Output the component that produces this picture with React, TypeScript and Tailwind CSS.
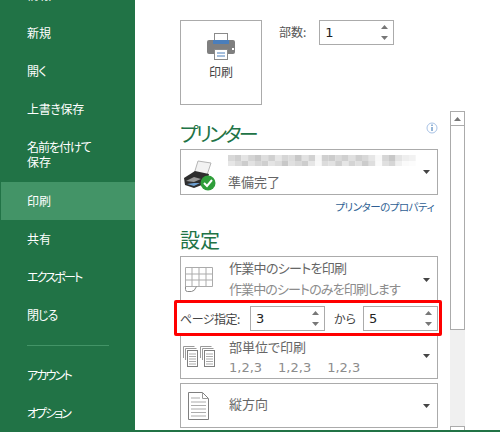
const menuTop = [
  { label: "新規" },
  { label: "開く", cls: "tracking-[-0.5px]" },
  { label: "上書き保存", cls: "tracking-[-0.3px]" },
];
const menuMid = [
  { label: "共有" },
  { label: "エクスポート", cls: "tracking-[-1.800px]" },
  { label: "閉じる", cls: "tracking-[-1px]" },
];

function MenuItem({ label, active, cls }: { label: string; active?: boolean; cls?: string }) {
  return (
    <div className={`flex h-[38px] items-center pb-[2px] ${active ? "ml-px bg-[#439467] pl-[26px]" : "pl-[27px]"} ${cls ?? ""}`}>
      {label}
    </div>
  );
}

function Sidebar() {
  return (
    <aside className="flex h-[432px] w-[135px] shrink-0 flex-col overflow-hidden bg-[#217346] text-[12px] leading-[15px] text-white">
      <div className="-mt-[24px]">
        <MenuItem label="情報" />
        {menuTop.map((m) => (
          <MenuItem key={m.label} label={m.label} cls={m.cls} />
        ))}
        <div className="flex h-[54px] flex-col justify-center pb-[2px] pl-[27px]">
          <span className="tracking-[-1px]">名前を付けて</span>
          <span>保存</span>
        </div>
        <MenuItem label="印刷" active />
        {menuMid.map((m) => (
          <MenuItem key={m.label} label={m.label} cls={m.cls} />
        ))}
        <div className="ml-[27px] mt-[11px] h-px w-[82px] bg-[#439467]" />
        <div className="mt-[10px]">
          <MenuItem label="アカウント" cls="tracking-[-1.800px]" />
          <MenuItem label="オプション" cls="tracking-[-2px]" />
        </div>
      </div>
    </aside>
  );
}

function Arrow({ up }: { up?: boolean }) {
  return (
    <svg width="7" height="4" viewBox="0 0 7 4" className="block">
      <path d={up ? "M3.5 0 7 4H0z" : "M0 0h7L3.5 4z"} fill="#777" />
    </svg>
  );
}

function Spinner({ value }: { value: string }) {
  return (
    <div className="flex h-[25px] w-[75px] items-center justify-between border border-[#ababab] bg-white pl-[5px] pr-[5px]">
      <span className="font-['DejaVu_Sans',sans-serif] text-[13px] text-[#222]">{value}</span>
      <div className="flex flex-col gap-[7px]">
        <Arrow up />
        <Arrow />
      </div>
    </div>
  );
}

function Caret() {
  return (
    <svg width="7" height="4" viewBox="0 0 7 4" className="mr-[7px] shrink-0">
      <path d="M0 0h7L3.5 4z" fill="#444" />
    </svg>
  );
}

function SelectBox({
  icon,
  iconPad,
  title,
  sub,
  className,
  textClass,
}: {
  icon: React.ReactNode;
  iconPad: string;
  title: React.ReactNode;
  sub?: React.ReactNode;
  className: string;
  textClass: string;
}) {
  return (
    <div className={`flex items-center border border-[#ababab] bg-white ${className}`}>
      <div className={`flex w-[48px] shrink-0 ${iconPad}`}>{icon}</div>
      <div className={`flex flex-1 flex-col gap-[6px] text-[13px] leading-[15px] text-[#666] ${textClass}`}>
        {title}
        {sub}
      </div>
      <Caret />
    </div>
  );
}

function BigPrinterIcon() {
  return (
    <svg width="28" height="27" viewBox="0 0 28 27">
      <rect x="7.5" y="0.5" width="13" height="9" fill="#fff" stroke="#8a8a8a" />
      <rect x="0" y="7" width="28" height="14" rx="2" fill="#7f7f7f" />
      <rect x="6" y="7" width="16" height="4" fill="#4a7ebb" />
      <rect x="25" y="15" width="2" height="2" fill="#fff" />
      <rect x="7.5" y="16.5" width="13" height="10" fill="#fff" stroke="#8a8a8a" />
      <path d="M10 20h8M10 23h8" stroke="#4a7ebb" />
    </svg>
  );
}

function PrinterStatusIcon() {
  return (
    <svg width="34" height="32" viewBox="0 0 34 32">
      <path d="M15 2 28 4 24 16 11 15z" fill="#f2f2f2" stroke="#b5b5b5" />
      <path d="M1 19 12 12 26 15 24 24 11 29 2 26z" fill="#2e2e2e" />
      <path d="M3 22 11 23 18 20 11 18z" fill="#9a9a9a" />
      <path d="M4 25 11 27 17 24 11 24z" fill="#6d9fd0" />
      <circle cx="25" cy="24" r="7.5" fill="#2f9e3a" />
      <path d="M21 24l3 3 5-6" fill="none" stroke="#fff" strokeWidth="2" />
    </svg>
  );
}

// the printer name is pixelated in the picture
function BlurredName() {
  const top = ["#d8d8d8", "#cfcfcf", "#e4e4e4", "#d4d4d4", "#c9c9c9", "#dedede", "#d0d0d0", "#e6e6e6", "#d6d6d6", "#dcdcdc", "#c8c8c8", "#e2e2e2", "#d2d2d2", "#f6f6f6", "#d0d0d0", "#cccccc", "#dadada", "#d0d0d0", "#e0e0e0", "#cfcfcf", "#d8d8d8", "#e6e6e6", "#f8f8f8", "#d6d6d6", "#c8c8c8", "#e4e4e4", "#eeeeee", "#f2f2f2"];
  const bottom = ["#e6e6e6", "#dadada", "#cccccc", "#e2e2e2", "#d6d6d6", "#cfcfcf", "#e4e4e4", "#dcdcdc", "#c8c8c8", "#e0e0e0", "#d8d8d8", "#cdcdcd", "#e6e6e6", "#f8f8f8", "#dcdcdc", "#e2e2e2", "#cfcfcf", "#e6e6e6", "#d4d4d4", "#e0e0e0", "#cccccc", "#dedede", "#fafafa", "#e0e0e0", "#d6d6d6", "#f0f0f0", "#fafafa", "#fcfcfc"];
  return (
    <svg width="188" height="11" viewBox="0 0 188 11" className="block">
      {top.map((c, i) => (
        <g key={i}>
          <rect x={i * 6.7} y="0" width="6.8" height="6" fill={c} />
          <rect x={i * 6.7} y="6" width="6.8" height="5" fill={bottom[i]} />
        </g>
      ))}
    </svg>
  );
}

function SheetIcon() {
  return (
    <svg width="29" height="26" viewBox="0 0 29 26" fill="none" stroke="#ababab">
      <path d="M.5.5h27v19H.5zM.5 7h27M.5 13h27M7 .5v19M14 .5v19M21 .5v19" />
      <path d="M.5 19.500v3q0 2 2 2h4q3 0 5-5" stroke="#8a8a8a" />
    </svg>
  );
}

function CollateIcon() {
  const group = (x: number) => (
    <g key={x} fill="none">
      <path d={`M${x + 0.5} 12V.5h11M${x + 2.5} 14V2.5h11`} stroke="#9a9a9a" />
      <rect x={x + 4.5} y="4.5" width="10" height="16" fill="#fff" stroke="#7f7f7f" />
      <path d={`M${x + 6} 8h7M${x + 6} 10.5h7M${x + 6} 13h7M${x + 6} 15.5h7M${x + 6} 18h7`} stroke="#ababab" />
    </g>
  );
  return (
    <svg width="33" height="21" viewBox="0 0 33 21">
      {group(0)}
      {group(17)}
    </svg>
  );
}

function PortraitIcon() {
  return (
    <svg width="21" height="28" viewBox="0 0 21 28" fill="none">
      <path d="M.5.5h14l6 6v21H.5z" fill="#fff" stroke="#7f7f7f" />
      <path d="M14.5.5v6h6" stroke="#9a9a9a" />
      <path d="M3 6h9M3 10h15M3 13.500h15M3 17h15M3 20.500h15M3 24h15" stroke="#ababab" />
    </svg>
  );
}

function InfoIcon() {
  return (
    <svg width="12" height="12" viewBox="0 0 12 12">
      <circle cx="6" cy="6" r="5" fill="#fff" stroke="#a9c3e6" />
      <path d="M6 2.500v1.500M6 5v4" stroke="#2b6cb0" />
    </svg>
  );
}

function Scrollbar() {
  return (
    <div className="ml-[12px] mt-[111px] flex h-[319px] w-[15px] flex-col bg-[#f0f0f0]">
      <div className="flex h-[15px] shrink-0 items-center justify-center border border-[#ababab] bg-white">
        <Arrow up />
      </div>
      <div className="h-[204px] border border-t-0 border-[#ababab] bg-white" />
      <div className="mt-auto h-[4px] border border-b-0 border-[#ababab] bg-white" />
    </div>
  );
}

export default function App() {
  return (
    <main className="flex h-[432px] w-[500px] overflow-hidden bg-white font-['Noto_Sans_CJK_JP','Liberation_Sans',sans-serif] [font-feature-settings:'palt']">
      <Sidebar />
      <div className="flex flex-1 flex-col">
        <div className="flex h-[430px] pl-[45px]">
          <div className="flex w-[258px] shrink-0 flex-col pt-[20px]">
            {/* copies + print button */}
            <div className="flex items-start">
              <div className="flex h-[85px] w-[82px] flex-col items-center border border-[#ababab] pt-[12px] text-[12px] leading-[15px] text-[#444]">
                <BigPrinterIcon />
                <span className="mt-[4px]">印刷</span>
              </div>
              <span className="ml-[17px] mt-[3px] text-[12px] leading-[18px] text-[#555]">部数:</span>
              <div className="ml-[13px]">
                <Spinner value="1" />
              </div>
            </div>

            {/* printer */}
            <div className="mt-[14px] flex h-[30px] items-center justify-between">
              <h2 className="text-[20px] leading-[30px] tracking-[-2.800px] text-[#217346]">プリンター</h2>
              <div className="mb-[13px]">
                <InfoIcon />
              </div>
            </div>
            <div className="flex h-[46px] items-center border border-[#ababab]">
              <div className="flex w-[47px] shrink-0 pl-[2px] pt-[5px]">
                <PrinterStatusIcon />
              </div>
              <div className="flex flex-1 flex-col gap-[8px] text-[13px] leading-[15px] text-[#666]">
                <BlurredName />
                <span>準備完了</span>
              </div>
              <Caret />
            </div>
            <div className="mt-[4px] pr-[4px] text-right text-[10.500px] leading-[16px] tracking-[-0.500px] text-[#2f5f94]">プリンターのプロパティ</div>

            {/* settings */}
            <h2 className="mt-[7px] h-[34px] text-[20px] leading-[36px] text-[#217346]">設定</h2>
            <SelectBox
              className="h-[47px]"
              iconPad="pl-[4px]"
              textClass="pb-[4px]"
              icon={<SheetIcon />}
              title={<span className="tracking-[-0.700px]">作業中のシートを印刷</span>}
              sub={<span className="tracking-[-0.900px] text-[#8c8c8c]">作業中のシートのみを印刷します</span>}
            />

            <div className="relative flex h-[30px] items-start pt-[3px]">
              <div className="pointer-events-none absolute -left-[6px] -right-[4px] -top-[3px] -bottom-[3px] z-10 rounded-[2px] border-[3px] border-[#ff0000]" />
              <span className="w-[70px] text-[12px] leading-[25px] tracking-[-0.500px] text-[#444]">ページ指定:</span>
              <Spinner value="3" />
              <span className="ml-[9px] w-[29px] text-[12px] leading-[25px] text-[#444]">から</span>
              <Spinner value="5" />
            </div>

            <SelectBox
              className="h-[46px]"
              iconPad="pl-[2px]"
              textClass="pt-[2px]"
              icon={<CollateIcon />}
              title={<span>部単位で印刷</span>}
              sub={
                <div className="flex gap-[16px] font-['DejaVu_Sans',sans-serif] text-[#8c8c8c]">
                  <span>1,2,3</span>
                  <span>1,2,3</span>
                  <span>1,2,3</span>
                </div>
              }
            />
            <SelectBox className="mt-[4px] h-[45px]" iconPad="pl-[7px]" textClass="pb-[4px]" icon={<PortraitIcon />} title={<span>縦方向</span>} />
          </div>
          <Scrollbar />
        </div>
        <div className="h-[2px] bg-[#217346]" />
      </div>
    </main>
  );
}
